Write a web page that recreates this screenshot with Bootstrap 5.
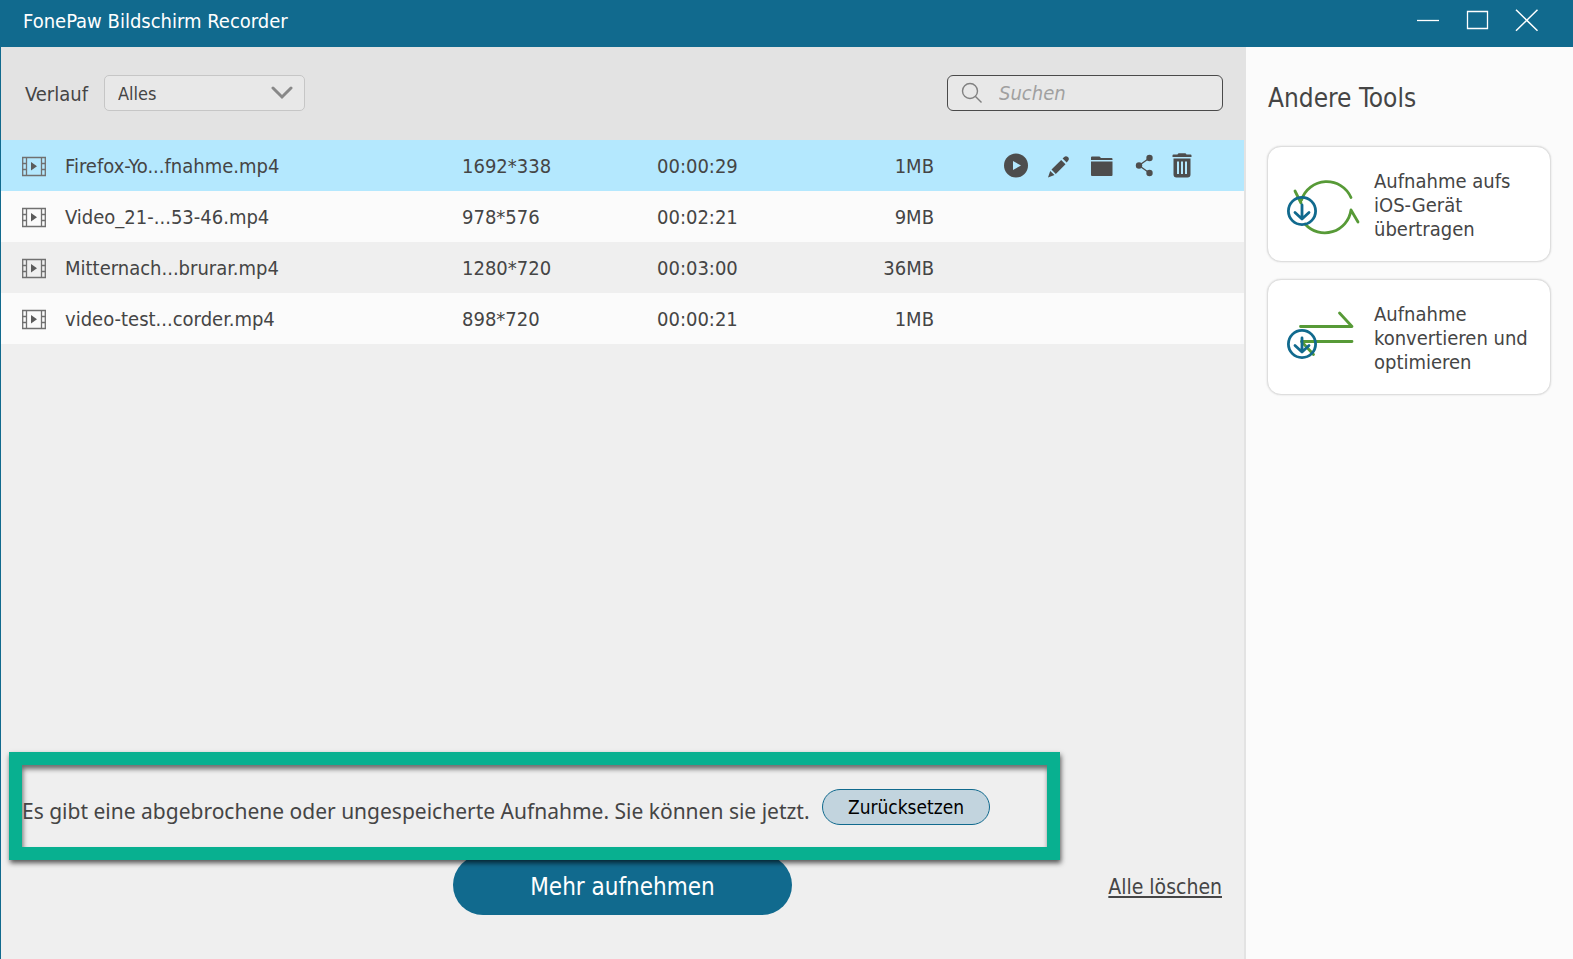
<!DOCTYPE html>
<html lang="de">
<head>
<meta charset="utf-8">
<meta name="viewport" content="width=device-width, initial-scale=1">
<title>FonePaw Bildschirm Recorder</title>
<link href="https://cdn.jsdelivr.net/npm/bootstrap@5.3.0/dist/css/bootstrap.min.css" rel="stylesheet">
<style>
  :root { --brand: #116a8e; --ink: #454545; --panel: #fbfbfb; }
  body { font-family: Tahoma, "DejaVu Sans Condensed", "Noto Sans", sans-serif; font-size: 20px; line-height: 24px; color: var(--ink); background: #efefef; }
  button { font-family: inherit; }
  .titlebar { background: var(--brand); color: #fff; height: 47px; padding: 0 34px 6px 23px; }
  .titlebar h1 { font-size: 20px; line-height: 24px; }
  .win-btn { width: 24px; height: 24px; color: #fff; line-height: 0; }
  .history { border-left: 1px solid var(--brand); border-right: 2px solid #e3e3e3; }
  .filters { background: #e3e3e3; height: 93px; padding: 0 21px 1px 24px; }
  .filters label { padding-top: 2px; }
  .filter-select { width: 201px; height: 36px; padding: 0 40px 0 13px; font-size: 18px; color: var(--ink); border: 1px solid #c6c6c6; border-radius: 5px; background-color: #e8e8e8; background-size: 22px 14px; background-position: right 11px center;
    background-image: url("data:image/svg+xml,%3Csvg xmlns='http://www.w3.org/2000/svg' viewBox='0 0 22 14'%3E%3Cpath d='M2 2l9 9 9-9' fill='none' stroke='%23888' stroke-width='3' stroke-linecap='round'/%3E%3C/svg%3E"); }
  .search-box { width: 276px; height: 36px; padding: 0 13px; border: 1px solid #4a4a4a; border-radius: 6px; background: #e8e8e8; }
  .search-box input { font-size: 20px; color: var(--ink); background: none; margin-left: 16px; }
  .search-box input::placeholder { color: #a0a0a0; font-style: italic; opacity: 1; }
  .files { table-layout: fixed; --bs-table-bg: transparent; --bs-table-color: var(--ink); }
  .files td { height: 51px; padding: 0; border: 0; background: #fbfbfb; color: var(--ink); white-space: nowrap; }
  .files tr:nth-child(odd) td { background: #efefef; }
  .files tr.selected td { background: #b4e8fe; }
  .c-icon { width: 64px; } .c-dim { width: 195px; } .c-time { width: 165px; } .c-size { width: 112px; } .c-act { width: 310px; }
  .files td.film { padding-left: 20px; }
  .files td.acts { padding-left: 69px; }
  .act { color: #4d4d4d; line-height: 0; }
  .acts-row { gap: 17px; }
  .notice { margin: 0 184px 0 8px; min-height: 108px; padding: 2px 57px 0 0; border: 13px solid #08b090; z-index: 1;
    box-shadow: 1px 3px 5px rgba(0,0,0,.65), inset 1px 4px 5px rgba(0,0,0,.55); }
  .notice p { font-family: Tahoma, "Noto Sans", sans-serif; font-size: 21px; padding-top: 8px; }
  .btn-reset { width: 168px; height: 36px; padding: 0; font-size: 19px; line-height: 24px; color: #000; background: #c2d4de; border: 1px solid var(--brand); }
  .footer-bar { display: grid; grid-template-columns: 1fr auto 1fr; margin-top: -5px; padding: 0 22px 44px; }
  .btn-record { width: 339px; height: 60px; padding: 4px 0 0; font-size: 24px; color: #fff; background: var(--brand); border: 0; }
  .clear-link { font-size: 21px; color: var(--ink); padding-top: 3px; }
  .tools { width: 327px; background: var(--panel); padding: 34px 22px 0; }
  .tools h2 { font-size: 26px; line-height: 34px; margin-bottom: 31px; }
  .tool-list { gap: 17px; margin-left: -1px; }
  .tool-card { height: 116px; padding: 2px 12px 0 18px; color: var(--ink); background: #fff; border: 1px solid #dedede; border-radius: 14px; box-shadow: 0 0 2px rgba(0,0,0,.15); }
  .tool-card svg { margin-right: 14px; }
</style>
</head>
<body>
<div class="d-flex flex-column min-vh-100">
  <header class="titlebar d-flex align-items-center">
    <h1 class="m-0 fw-normal flex-grow-1">FonePaw Bildschirm Recorder</h1>
    <div class="d-flex" style="gap:26px">
      <button type="button" class="win-btn btn p-0 border-0" aria-label="Minimieren"><svg width="24" height="24" fill="none" stroke="currentColor" stroke-width="1.3"><path d="M2 11.5h22"/></svg></button>
      <button type="button" class="win-btn btn p-0 border-0" aria-label="Maximieren"><svg width="24" height="24" fill="none" stroke="currentColor" stroke-width="1.3"><path d="M2.500 2.500h20v17h-20z"/></svg></button>
      <button type="button" class="win-btn btn p-0 border-0" aria-label="Schließen"><svg width="24" height="24" fill="none" stroke="currentColor" stroke-width="1.5"><path d="M1 .8l21.500 21M22.500 .8L1 21.8"/></svg></button>
    </div>
  </header>

  <div class="d-flex flex-grow-1">
    <main class="history d-flex flex-column flex-grow-1">
      <div class="filters d-flex align-items-center">
        <label for="filter" class="me-3">Verlauf</label>
        <select id="filter" class="filter-select form-select"><option>Alles</option></select>
        <div class="search-box d-flex align-items-center ms-auto">
          <svg class="flex-shrink-0" width="22" height="22" fill="none" stroke="#808080" stroke-width="1.400"><circle cx="9" cy="9" r="7.500"/><path d="M14.500 14.500l6 6"/></svg>
          <input type="search" class="border-0 p-0 w-100" placeholder="Suchen" aria-label="Suchen">
        </div>
      </div>

      <svg class="d-none">
        <symbol id="film" viewBox="0 0 26 22">
          <path d="M1 1.500h24M1 19.500h24" stroke="#707070" stroke-width="1.600" fill="none"/>
          <path d="M1.700 1v19M5.500 1v19M20.500 1v19M24.300 1v19M1 7.500h4.500M1 13.500h4.500M20.500 7.500H25M20.500 13.500H25" stroke="#707070" stroke-width="1.300" fill="none"/>
          <path d="M10 6l6 4.300-6 4.300z" fill="#5c5c5c"/>
        </symbol>
      </svg>
      <table class="files table align-middle mb-0">
        <colgroup><col class="c-icon"><col><col class="c-dim"><col class="c-time"><col class="c-size"><col class="c-act"></colgroup>
        <tbody>
          <tr class="selected">
            <td class="film"><svg width="26" height="22"><use href="#film"/></svg></td>
            <td>Firefox-Yo...fnahme.mp4</td><td>1692*338</td><td>00:00:29</td><td class="text-end">1MB</td>
            <td class="acts">
              <div class="acts-row d-flex align-items-center">
                <button type="button" class="act btn p-0 border-0" aria-label="Abspielen"><svg width="26" height="26"><circle cx="13" cy="12.500" r="12" fill="currentColor"/><path d="M10 8v9l8-4.500z" fill="#b4e8fe"/></svg></button>
                <button type="button" class="act btn p-0 border-0" aria-label="Bearbeiten"><svg width="26" height="26" fill="currentColor"><path d="M2 24.500l2.200-6.600 4.300 4.200zM5.500 16.600L15.200 7l4.300 4.300-9.700 9.600zM16.600 5.600l1.600-1.600c1.300-1.300 2.600-1 3.700.1s1.400 2.500.2 3.700L20.700 9.500z"/></svg></button>
                <button type="button" class="act btn p-0 border-0" aria-label="Ordner öffnen"><svg width="26" height="26" fill="currentColor"><path d="M2 7V4.500q0-1 1-1h7.500l1.500 1.500h10.500q1 0 1 1V7zM2 8.500h21.500v13.500q0 1-1 1H3q-1 0-1-1z"/></svg></button>
                <button type="button" class="act btn p-0 border-0" aria-label="Teilen"><svg width="23" height="26" fill="currentColor"><path d="M17.500 5L7 12.500 17.500 20" fill="none" stroke="currentColor" stroke-width="1.300"/><circle cx="17.500" cy="5" r="3.200"/><circle cx="7" cy="12.500" r="3.200"/><circle cx="17.500" cy="20" r="3.200"/></svg></button>
                <button type="button" class="act btn p-0 border-0" aria-label="Löschen"><svg width="20" height="26" fill="currentColor"><path d="M.5 2.500q0-1 1-1H5.500Q6 .3 7 .3h6q1 0 1.500 1.200h4q1 0 1 1V4H.5z"/><path fill-rule="evenodd" d="M1.500 5.500h17v16q0 3-3 3h-11q-3 0-3-3zM5 8.500v12.500h2V8.500zM9 8.500v12.500h2V8.500zM13 8.500v12.500h2V8.500z"/></svg></button>
              </div>
            </td>
          </tr>
          <tr><td class="film"><svg width="26" height="22"><use href="#film"/></svg></td><td>Video_21-...53-46.mp4</td><td>978*576</td><td>00:02:21</td><td class="text-end">9MB</td><td></td></tr>
          <tr><td class="film"><svg width="26" height="22"><use href="#film"/></svg></td><td>Mitternach...brurar.mp4</td><td>1280*720</td><td>00:03:00</td><td class="text-end">36MB</td><td></td></tr>
          <tr><td class="film"><svg width="26" height="22"><use href="#film"/></svg></td><td>video-test...corder.mp4</td><td>898*720</td><td>00:00:21</td><td class="text-end">1MB</td><td></td></tr>
        </tbody>
      </table>

      <div class="mt-auto">
        <div class="notice position-relative d-flex align-items-center">
          <p class="m-0 text-nowrap">Es gibt eine abgebrochene oder ungespeicherte Aufnahme. Sie können sie jetzt.</p>
          <button type="button" class="btn btn-reset rounded-pill ms-auto">Zurücksetzen</button>
        </div>
        <div class="footer-bar align-items-center">
          <span></span>
          <button type="button" class="btn btn-record rounded-pill">Mehr aufnehmen</button>
          <a href="#" class="clear-link text-end">Alle löschen</a>
        </div>
      </div>
    </main>

    <aside class="tools flex-shrink-0">
      <h2 class="fw-normal">Andere Tools</h2>
      <div class="tool-list d-grid">
        <button type="button" class="tool-card d-flex align-items-center text-start">
          <svg class="flex-shrink-0" width="74" height="62" viewBox="0 -2 74 62" fill="none" stroke-width="2.800" stroke-linecap="round" stroke-linejoin="round"><g stroke="#579a37"><path d="M15.500 24A26.500 26.500 0 0 1 65 21.500M19 48A26.500 26.500 0 0 0 65 34l7 12M9 15l6 12"/></g><circle cx="16" cy="35" r="13.600" stroke="#116a8e"/><path d="M16 29v13M9 36.500l7 6.500 7-6.500" stroke="#116a8e"/></svg>
          <span>Aufnahme aufs iOS-Gerät übertragen</span>
        </button>
        <button type="button" class="tool-card d-flex align-items-center text-start">
          <svg class="flex-shrink-0" width="74" height="62" viewBox="0 -2 74 62" fill="none" stroke-width="2.800" stroke-linecap="round" stroke-linejoin="round"><g stroke="#579a37"><path d="M14.500 17.500H66L53.500 4M66 32.500H15.500l12 13"/></g><circle cx="16" cy="35" r="13.600" stroke="#116a8e"/><path d="M16 29v13M9 36.500l7 6.500 7-6.500" stroke="#116a8e"/></svg>
          <span>Aufnahme konvertieren und optimieren</span>
        </button>
      </div>
    </aside>
  </div>
</div>
<script src="https://cdn.jsdelivr.net/npm/bootstrap@5.3.0/dist/js/bootstrap.bundle.min.js"></script>
</body>
</html>
